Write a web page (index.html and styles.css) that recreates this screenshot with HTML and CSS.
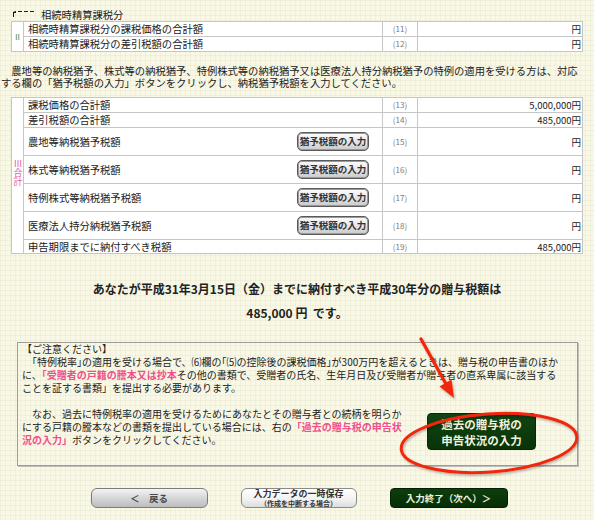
FILE: index.html
```html
<!DOCTYPE html>
<html lang="ja">
<head>
<meta charset="utf-8">
<title>贈与税の計算</title>
<link rel="stylesheet" href="styles.css">
</head>
<body>
<div class="page">
  <div class="sec-title">
    <svg class="sec-icon" viewBox="0 0 24 8" aria-hidden="true">
      <path d="M1 2 L4 1 L4 3 L2 3 L2 7 L1 7 Z" fill="#111"/>
      <rect x="6" y="1" width="4" height="1" fill="#222"/>
      <rect x="12" y="1" width="4" height="1" fill="#222"/>
      <rect x="18" y="1" width="4" height="1" fill="#222"/>
    </svg>
    <span>相続時精算課税分</span>
  </div>

  <div class="grid grid-ii">
    <div class="cell side side-ii">Ⅱ</div>
    <div class="cell label">相続時精算課税分の課税価格の合計額</div>
    <div class="cell num">(11)</div>
    <div class="cell val">円</div>
    <div class="cell label">相続時精算課税分の差引税額の合計額</div>
    <div class="cell num">(12)</div>
    <div class="cell val">円</div>
  </div>

  <p class="intro">　農地等の納税猶予、株式等の納税猶予、特例株式等の納税猶予又は医療法人持分納税猶予の特例の適用を受ける方は、対応<br>する欄の「猶予税額の入力」ボタンをクリックし、納税猶予税額を入力してください。</p>

  <div class="grid grid-iii">
    <div class="cell side side-iii"><span class="vert">Ⅲ合計</span></div>
    <div class="cell label">課税価格の合計額</div>
    <div class="cell num">(13)</div>
    <div class="cell val">5,000,000円</div>
    <div class="cell label">差引税額の合計額</div>
    <div class="cell num">(14)</div>
    <div class="cell val">485,000円</div>
    <div class="cell label">農地等納税猶予税額<button class="btn-yuyo">猶予税額の入力</button></div>
    <div class="cell num">(15)</div>
    <div class="cell val">円</div>
    <div class="cell label">株式等納税猶予税額<button class="btn-yuyo">猶予税額の入力</button></div>
    <div class="cell num">(16)</div>
    <div class="cell val">円</div>
    <div class="cell label">特例株式等納税猶予税額<button class="btn-yuyo">猶予税額の入力</button></div>
    <div class="cell num">(17)</div>
    <div class="cell val">円</div>
    <div class="cell label">医療法人持分納税猶予税額<button class="btn-yuyo">猶予税額の入力</button></div>
    <div class="cell num">(18)</div>
    <div class="cell val">円</div>
    <div class="cell label">申告期限までに納付すべき税額</div>
    <div class="cell num">(19)</div>
    <div class="cell val">485,000円</div>
  </div>

  <div class="result">
    <p class="result-line">あなたが平成31年3月15日（金）までに納付すべき平成30年分の贈与税額は</p>
    <p class="result-line result-amount">485,000 円&nbsp;&nbsp;です。</p>
  </div>

  <div class="notice">
    <p class="notice-head">【ご注意ください】</p>
    <p class="notice-text">　<span class="hw">「</span>特例税率<span class="hw">」</span>の適用を受ける場合で、⑹欄の<span class="hw">「</span>⑸の控除後の課税価格<span class="hw">」</span>が300万円を超えるときは、贈与税の申告書のほか<br>に、<em class="pink">「受贈者の戸籍の謄本又は抄本</em>その他の書類で、受贈者の氏名、生年月日及び受贈者が贈与者の直系卑属に該当する<br>ことを証する書類」を提出する必要があります。</p>
    <div class="notice-lower">
      <p class="notice-text">　なお、過去に特例税率の適用を受けるためにあなたとその贈与者との続柄を明らか<br>にする戸籍の謄本などの書類を提出している場合には、右の<em class="pink">「過去の贈与税の申告状<br>況の入力」</em>ボタンをクリックしてください。</p>
      <button class="btn-past">過去の贈与税の<br>申告状況の入力</button>
    </div>
  </div>

  <div class="nav">
    <button class="btn-nav btn-back">＜　戻る</button>
    <button class="btn-nav btn-save"><span class="save-main">入力データの一時保存</span><span class="save-sub">（作成を中断する場合）</span></button>
    <button class="btn-nav btn-next">入力終了（次へ）＞</button>
  </div>

  <svg class="annot" viewBox="0 0 594 520" aria-hidden="true">
    <defs>
      <filter id="sh" x="-10%" y="-10%" width="120%" height="130%">
        <feDropShadow dx="1" dy="1.5" stdDeviation="1" flood-color="#000" flood-opacity="0.3"/>
      </filter>
    </defs>
    <g filter="url(#sh)">
      <ellipse cx="489" cy="435" rx="88" ry="29" fill="none" stroke="#f2280f" stroke-width="3" transform="rotate(-4 489 435)"/>
      <line x1="421" y1="331" x2="446" y2="376" stroke="#f2280f" stroke-width="3.2" stroke-linecap="round"/>
      <path d="M454 390 L439.5 378.5 L451.5 371.5 Z" fill="#f2280f"/>
    </g>
  </svg>
</div>
</body>
</html>
```

FILE: styles.css
```css
* { box-sizing: border-box; }
html, body { margin: 0; padding: 0; }
body {
  width: 594px;
  height: 520px;
  overflow: hidden;
  font-family: "Noto Sans CJK JP", "Noto Sans", sans-serif;
  color: #222;
  background-color: #f9f8e6;
  background-image:
    linear-gradient(to right, rgba(190, 190, 150, 0.13) 1px, transparent 1px),
    linear-gradient(to bottom, rgba(190, 190, 150, 0.13) 1px, transparent 1px);
  background-size: 5px 5px;
}
p { margin: 0; }
em { font-style: normal; }
button { font-family: inherit; padding: 0; cursor: pointer; }

.page {
  position: relative;
  width: 594px;
  height: 520px;
}

/* section title */
.sec-title {
  display: flex;
  align-items: center;
  height: 13px;
  margin: 8px 0 0 12px;
  font-size: 10.3px;
  line-height: 13px;
}
.sec-icon { width: 24px; height: 8px; margin-right: 5px; margin-top: -2px; }

/* tables */
.grid {
  display: grid;
  margin-left: 11px;
  width: 572px;
  padding: 1px;
  gap: 1px;
  background: #c6c6c6;
  grid-template-columns: 11px 358px 34px 164px;
}
.grid-ii { grid-template-rows: 14px 14px; }
.grid-iii { grid-template-rows: 14px 14px 27px 27px 27px 27px 13px; }

.cell {
  background: #fff;
  display: flex;
  align-items: center;
  font-size: 10.3px;
  line-height: 12px;
  white-space: nowrap;
}
.side {
  grid-column: 1;
  grid-row: 1 / -1;
  justify-content: center;
}
.side-ii { color: #3d8a3d; font-size: 8px; }
.side-iii {
  color: #e5609c;
  font-size: 9px;
  padding-bottom: 6px;
}
.vert {
  writing-mode: vertical-rl;
  text-orientation: upright;
  line-height: 10px;
}
.label { padding-left: 4px; padding-right: 13px; justify-content: space-between; }
.num { justify-content: center; color: #7a7a7a; font-size: 8px; }
.val { justify-content: flex-end; padding-right: 1px; font-size: 9.5px; }

.btn-yuyo {
  width: 72px;
  height: 19px;
  border: 1px solid #5a5a5a;
  border-radius: 5px;
  background: linear-gradient(#fdfdfd, #e4e4e4 55%, #c9c9c9);
  box-shadow: inset 0 0 0 1px #9a9a9a;
  color: #333;
  font-size: 9.5px;
  font-weight: bold;
  line-height: 17px;
}

/* intro paragraph */
.intro {
  margin: 13px 0 8px 1px;
  font-size: 10.3px;
  line-height: 12px;
  white-space: nowrap;
}

/* result */
.result {
  margin-top: 27px;
  text-align: center;
  font-size: 12px;
  font-weight: bold;
  line-height: 16px;
}
.result-amount { margin-top: 8px; }

/* notice box */
.notice {
  margin: 21px 0 0 17px;
  width: 561px;
  height: 124px;
  border: 1px solid #9c9c9c;
  box-shadow: 1px 1px 0 #bdbdbd;
  padding: 0 4px;
  font-size: 10px;
  line-height: 13px;
}
.notice-head { line-height: 12px; }
.notice-text { margin-top: 0; white-space: nowrap; }
.hw { font-feature-settings: "halt"; }
.pink { color: #f0508c; font-weight: bold; }
.notice-lower {
  display: flex;
  align-items: flex-start;
  margin-top: 13px;
}
.notice-lower .notice-text { width: 385px; }
.btn-past {
  margin: 6px 37px 0 auto;
  width: 109px;
  height: 37px;
  border: 1px solid #062806;
  border-radius: 4px;
  background: linear-gradient(#124412, #083408);
  color: #eef2dc;
  font-size: 11.5px;
  font-weight: bold;
  line-height: 16px;
}

/* navigation */
.nav {
  display: flex;
  justify-content: center;
  gap: 33px;
  margin-top: 22px;
  padding-left: 4px;
}
.btn-nav {
  height: 20px;
  font-weight: bold;
  font-size: 9.5px;
}
.btn-back {
  width: 117px;
  border: 1px solid #7c7c7c;
  border-radius: 6px;
  background: linear-gradient(#f4f4f4, #d6d6d6 50%, #bdbdbd);
  color: #4a4a4a;
}
.btn-save {
  width: 116px;
  border: 1px solid #8a8a8a;
  border-radius: 6px;
  background: linear-gradient(#ffffff, #f1f1f1 60%, #dcdcdc);
  color: #333;
  display: flex;
  flex-direction: column;
  align-items: center;
  justify-content: center;
}
.save-main { font-size: 9px; line-height: 10px; }
.save-sub { font-size: 7px; line-height: 8px; }
.btn-next {
  width: 118px;
  border: 1px solid #042004;
  border-radius: 4px;
  background: linear-gradient(#0d3e0d, #062e06);
  color: #eef2dc;
}

/* annotation overlay */
.annot {
  position: absolute;
  left: 0;
  top: 0;
  width: 594px;
  height: 520px;
  pointer-events: none;
}
```
